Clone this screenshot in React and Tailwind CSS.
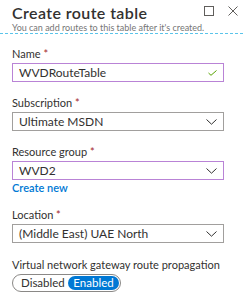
// Create route table panel

const FONT = { fontFamily: 'Lato, "Open Sans", sans-serif' };

function Chevron() {
  return (
    <svg width="11" height="6" viewBox="0 0 11 6" fill="none" className="shrink-0">
      <path d="M0.5 0.5 L5.5 5.2 L10.5 0.5" stroke="#323130" strokeWidth="1" />
    </svg>
  );
}

function Check() {
  return (
    <svg width="9" height="6" viewBox="0 0 9 6" fill="none" className="shrink-0">
      <path d="M0.5 3 L3 5.3 L8.5 0.5" stroke="#57a300" strokeWidth="1" />
    </svg>
  );
}

function Label({ children, required = true }) {
  return (
    <div className="text-[11px] leading-[14px] text-[#323130] mb-[2px] whitespace-nowrap">
      {children}
      {required && <span className="text-[#a4262c]"> *</span>}
    </div>
  );
}

function Field({ label, value, focused, icon }) {
  const border = focused ? "border-[#b983d6]" : "border-[#a19f9d]";
  return (
    <div>
      <Label>{label}</Label>
      <div
        className={
          "flex items-center justify-between h-[19px] w-[212px] border pl-[6px] pr-[6px] text-[12px] text-[#323130] " +
          border
        }
      >
        <span className="leading-none whitespace-nowrap">{value}</span>
        {icon === "check" ? <Check /> : <Chevron />}
      </div>
    </div>
  );
}

export default function App() {
  return (
    <div className="w-[243px] h-[300px] bg-white overflow-hidden" style={FONT}>
      {/* Header */}
      <div className="pl-3 pr-[6px] pt-[3px] flex items-start justify-between">
        <div className="whitespace-nowrap">
          <div className="text-[16px] leading-[20px] font-semibold tracking-[0.4px] text-[#323130]">
            Create route table
          </div>
          <div className="text-[9px] leading-[10px] text-[#767676]">
            You can add routes to this table after it's created.
          </div>
        </div>
        <div className="flex items-center gap-[14px] pt-[3px]">
          <div className="w-[10px] h-[10px] border border-[#605e5c]" />
          <svg width="10" height="10" viewBox="0 0 10 10" fill="none">
            <path d="M0.5 0.5 L9.5 9.5 M9.5 0.5 L0.5 9.5" stroke="#605e5c" strokeWidth="1" />
          </svg>
        </div>
      </div>
      <div className="border-t border-dashed border-[#5ac4ea]" />

      {/* Form */}
      <div className="px-3 pt-[13px]">
        <Field label="Name" value="WVDRouteTable" focused icon="check" />
        <div className="mt-[14px]">
          <Field label="Subscription" value="Ultimate MSDN" />
        </div>
        <div className="mt-[14px]">
          <Field label="Resource group" value="WVD2" focused />
          <div className="text-[11px] leading-[14px] font-semibold text-[#0078d4] mt-[1px]">
            Create new
          </div>
        </div>
        <div className="mt-[13px]">
          <Field label="Location" value="(Middle East) UAE North" />
        </div>
        <div className="mt-[15px]">
          <Label required={false}>Virtual network gateway route propagation</Label>
          <div className="flex items-center h-[18px] w-[109px] rounded-full border border-[#8a8886] pl-[8px] pr-[1px] text-[11.5px] leading-none">
            <span className="text-[#323130] flex-1 whitespace-nowrap">Disabled</span>
            <span className="h-[14px] w-[51px] shrink-0 justify-center rounded-full bg-[#0078d4] text-white flex items-center">
              Enabled
            </span>
          </div>
        </div>
      </div>
    </div>
  );
}
